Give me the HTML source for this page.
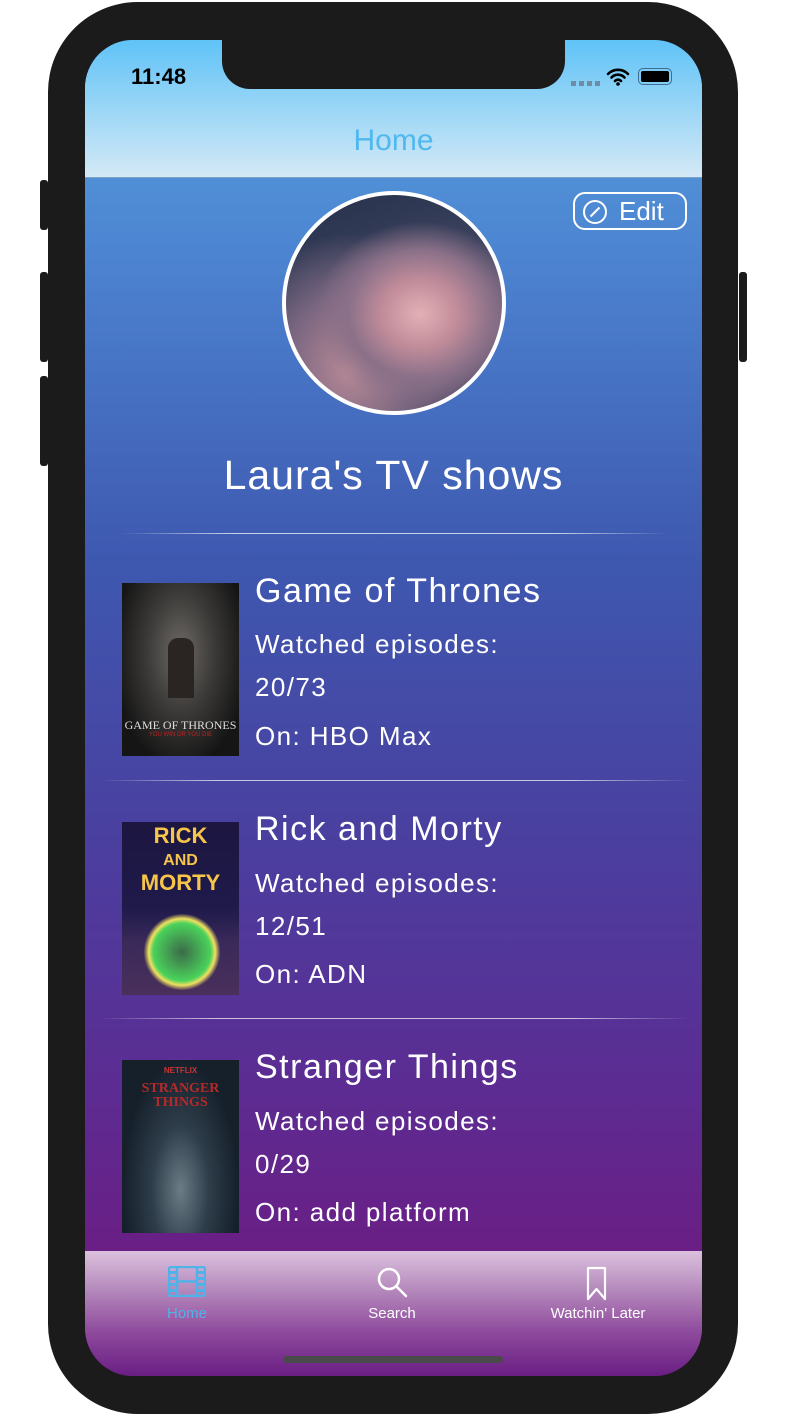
<!DOCTYPE html>
<html><head><meta charset="utf-8">
<style>
*{margin:0;padding:0;box-sizing:border-box}
body{width:792px;height:1424px;background:#fff;position:relative;overflow:hidden;font-family:"Liberation Sans",sans-serif}
.frame{position:absolute;left:48px;top:2px;width:690px;height:1412px;background:#1b1b1b;border-radius:90px}
.btn{position:absolute;background:#1b1b1b;width:8px;border-radius:3px}
.screen{position:absolute;left:85px;top:40px;width:617px;height:1336px;border-radius:48px;overflow:hidden;background:linear-gradient(#56a3df 0px,#4d86d2 200px,#3e58b0 520px,#4a3f9f 800px,#5c2c92 1050px,#6a1e84 1220px)}
.nav{position:absolute;left:0;top:0;width:617px;height:138px;background:linear-gradient(#60c3f7,#d4e9f6);border-bottom:1px solid #7aa3c4}
.notch{position:absolute;left:137px;top:0;width:343px;height:49px;background:#1b1b1b;border-radius:0 0 28px 28px}
.time{position:absolute;left:46px;top:24px;font-size:22px;font-weight:bold;color:#000}
.navt{position:absolute;left:0;width:617px;top:84px;text-align:center;color:#4fb8ef;font-size:30px}
.edit{position:absolute;left:488px;top:152px;width:114px;height:38px;border:2px solid #fff;border-radius:12px;color:#fff;font-size:26px;line-height:34px;padding-left:44px}
.avatar{position:absolute;left:197px;top:151px;width:224px;height:224px;border-radius:50%;border:4px solid #fff;background:radial-gradient(ellipse at 62% 55%,#e3b0b6 0,#c18c9a 20%,#8a7088 38%,transparent 55%),radial-gradient(ellipse at 30% 80%,#b88a97 0,#7a6680 30%,transparent 55%),linear-gradient(160deg,#25304a 0%,#3b425e 40%,#6c6179 70%,#4a4060 100%)}
.h1{position:absolute;left:0;width:617px;top:412px;text-align:center;color:#fff;font-size:41px;letter-spacing:1px}
.sep{position:absolute;height:1px;background:linear-gradient(90deg,rgba(255,255,255,0),rgba(255,255,255,.7) 20%,rgba(255,255,255,.7) 80%,rgba(255,255,255,0))}
.poster{position:absolute;left:37px;width:117px;height:173px;overflow:hidden}
.t{position:absolute;left:170px;color:#fff;white-space:nowrap}
.tt{font-size:34px;letter-spacing:1.5px}.td{font-size:26px;letter-spacing:1.4px}
.tab{position:absolute;left:0;top:1211px;width:617px;height:125px;background:linear-gradient(#dcc1de,#b68bbd 30%,#8e4a9c 65%,#6a1e84)}
.tl{position:absolute;top:54px;font-size:15px;color:#fff;text-align:center;width:160px}
.home{position:absolute;left:198px;top:1316px;width:220px;height:7px;border-radius:4px;background:#4a4a4a}
</style></head><body>
<div class="btn" style="left:40px;top:180px;height:50px"></div>
<div class="btn" style="left:40px;top:272px;height:90px"></div>
<div class="btn" style="left:40px;top:376px;height:90px"></div>
<div class="btn" style="left:739px;top:272px;height:90px"></div>
<div class="frame"></div>
<div class="screen">
 <div class="nav"></div>
 <div class="notch"></div>
 <div class="time">11:48</div>
 <div style="position:absolute;left:486px;top:41px;width:30px;height:5px;background:repeating-linear-gradient(90deg,#6e8da5 0 5px,transparent 5px 8px)"></div>
 <svg style="position:absolute;left:521px;top:28px" width="24" height="18" viewBox="0 0 24 18"><path d="M2 6a14 14 0 0 1 20 0M5.5 9.5a9 9 0 0 1 13 0M9 13a4 4 0 0 1 6 0" stroke="#000" stroke-width="2.6" fill="none" stroke-linecap="round"/><circle cx="12" cy="16" r="1.8"/></svg>
 <div style="position:absolute;left:553px;top:28px;width:34px;height:17px;border:1.5px solid #3d6e8f;border-radius:5px;padding:2px"><div style="background:#000;width:100%;height:100%;border-radius:2px"></div></div>
 <div class="navt">Home</div>
 <div class="edit"><svg style="position:absolute;left:7px;top:5px" width="26" height="26" viewBox="0 0 26 26"><circle cx="13" cy="13" r="11" stroke="#fff" stroke-width="2" fill="none"/><path d="M8.5 17.5L17.5 8.5" stroke="#fff" stroke-width="2"/></svg>Edit</div>
 <div class="avatar"></div>
 <div class="h1">Laura's TV shows</div>
 <div class="sep" style="left:35px;width:548px;top:493px"></div>

 <div class="poster" style="top:543px;background:radial-gradient(ellipse at 50% 40%,#6d6a66 0,#3d3b39 40%,#151515 80%)">
  <div style="position:absolute;left:46px;top:55px;width:26px;height:60px;background:#2a2522;border-radius:10px 10px 0 0"></div>
  <div style="position:absolute;left:0;top:135px;width:117px;text-align:center;color:#ddd;font-family:'Liberation Serif',serif;font-size:12px">GAME OF THRONES</div>
  <div style="position:absolute;left:0;top:149px;width:117px;text-align:center;color:#b22;font-size:6px">YOU WIN OR YOU DIE</div>
 </div>
 <div class="t tt" style="top:532px">Game of Thrones</div>
 <div class="t td" style="top:589px">Watched episodes:</div>
 <div class="t td" style="top:632px">20/73</div>
 <div class="t td" style="top:681px">On: HBO Max</div>
 <div class="sep" style="left:13px;width:592px;top:740px"></div>

 <div class="poster" style="top:782px;background:linear-gradient(#1c1640 0,#1f1a4a 50%,#3a2a5a 70%,#4a2f5a 100%)">
  <div style="position:absolute;left:10px;top:90px;width:100px;height:80px;border-radius:50%;background:radial-gradient(circle,#3c6a4a 0,#4ad25a 45%,#f0e060 52%,transparent 60%)"></div>
  <div style="position:absolute;left:0;top:3px;width:117px;text-align:center;color:#f6c54a;font-weight:bold;font-size:22px;line-height:22px">RICK<br><span style="font-size:16px">AND</span><br>MORTY</div>
 </div>
 <div class="t tt" style="top:770px">Rick and Morty</div>
 <div class="t td" style="top:828px">Watched episodes:</div>
 <div class="t td" style="top:871px">12/51</div>
 <div class="t td" style="top:919px">On: ADN</div>
 <div class="sep" style="left:13px;width:592px;top:978px"></div>

 <div class="poster" style="top:1020px;background:radial-gradient(ellipse at 50% 75%,#6a7c86 0,#2e3d4a 35%,#15202b 70%)">
  <div style="position:absolute;left:0;top:6px;width:117px;text-align:center;color:#c33;font-weight:bold;font-size:8px">NETFLIX</div>
  <div style="position:absolute;left:0;top:22px;width:117px;text-align:center;color:#b42a2a;font-family:'Liberation Serif',serif;font-weight:bold;font-size:14px;line-height:14px">STRANGER<br>THINGS</div>
 </div>
 <div class="t tt" style="top:1008px">Stranger Things</div>
 <div class="t td" style="top:1066px">Watched episodes:</div>
 <div class="t td" style="top:1109px">0/29</div>
 <div class="t td" style="top:1157px">On: add platform</div>

 <div class="tab">
  <svg style="position:absolute;left:83px;top:15px" width="38" height="31" viewBox="0 0 38 31"><rect x="1" y="1" width="36" height="29" rx="2" fill="none" stroke="#4fb3ea" stroke-width="2.5"/><path d="M9 1v29M29 1v29M9 15.5h20" stroke="#4fb3ea" stroke-width="2.5"/><g fill="#4fb3ea"><rect x="2" y="5" width="6" height="3"/><rect x="2" y="11" width="6" height="3"/><rect x="2" y="17" width="6" height="3"/><rect x="2" y="23" width="6" height="3"/><rect x="30" y="5" width="6" height="3"/><rect x="30" y="11" width="6" height="3"/><rect x="30" y="17" width="6" height="3"/><rect x="30" y="23" width="6" height="3"/></g></svg>
  <div class="tl" style="left:22px;color:#4fb3ea">Home</div>
  <svg style="position:absolute;left:291px;top:15px" width="34" height="34" viewBox="0 0 34 34"><circle cx="13" cy="13" r="10" fill="none" stroke="#fff" stroke-width="2.5"/><path d="M20 20l10 10" stroke="#fff" stroke-width="2.5" stroke-linecap="round"/></svg>
  <div class="tl" style="left:227px">Search</div>
  <svg style="position:absolute;left:501px;top:15px" width="22" height="35" viewBox="0 0 22 35"><path d="M2 2h17v31l-8.5-10L2 33z" fill="none" stroke="#fff" stroke-width="2.2" stroke-linejoin="round"/></svg>
  <div class="tl" style="left:433px">Watchin' Later</div>
 </div>
 <div class="home"></div>
</div>
</body></html>
